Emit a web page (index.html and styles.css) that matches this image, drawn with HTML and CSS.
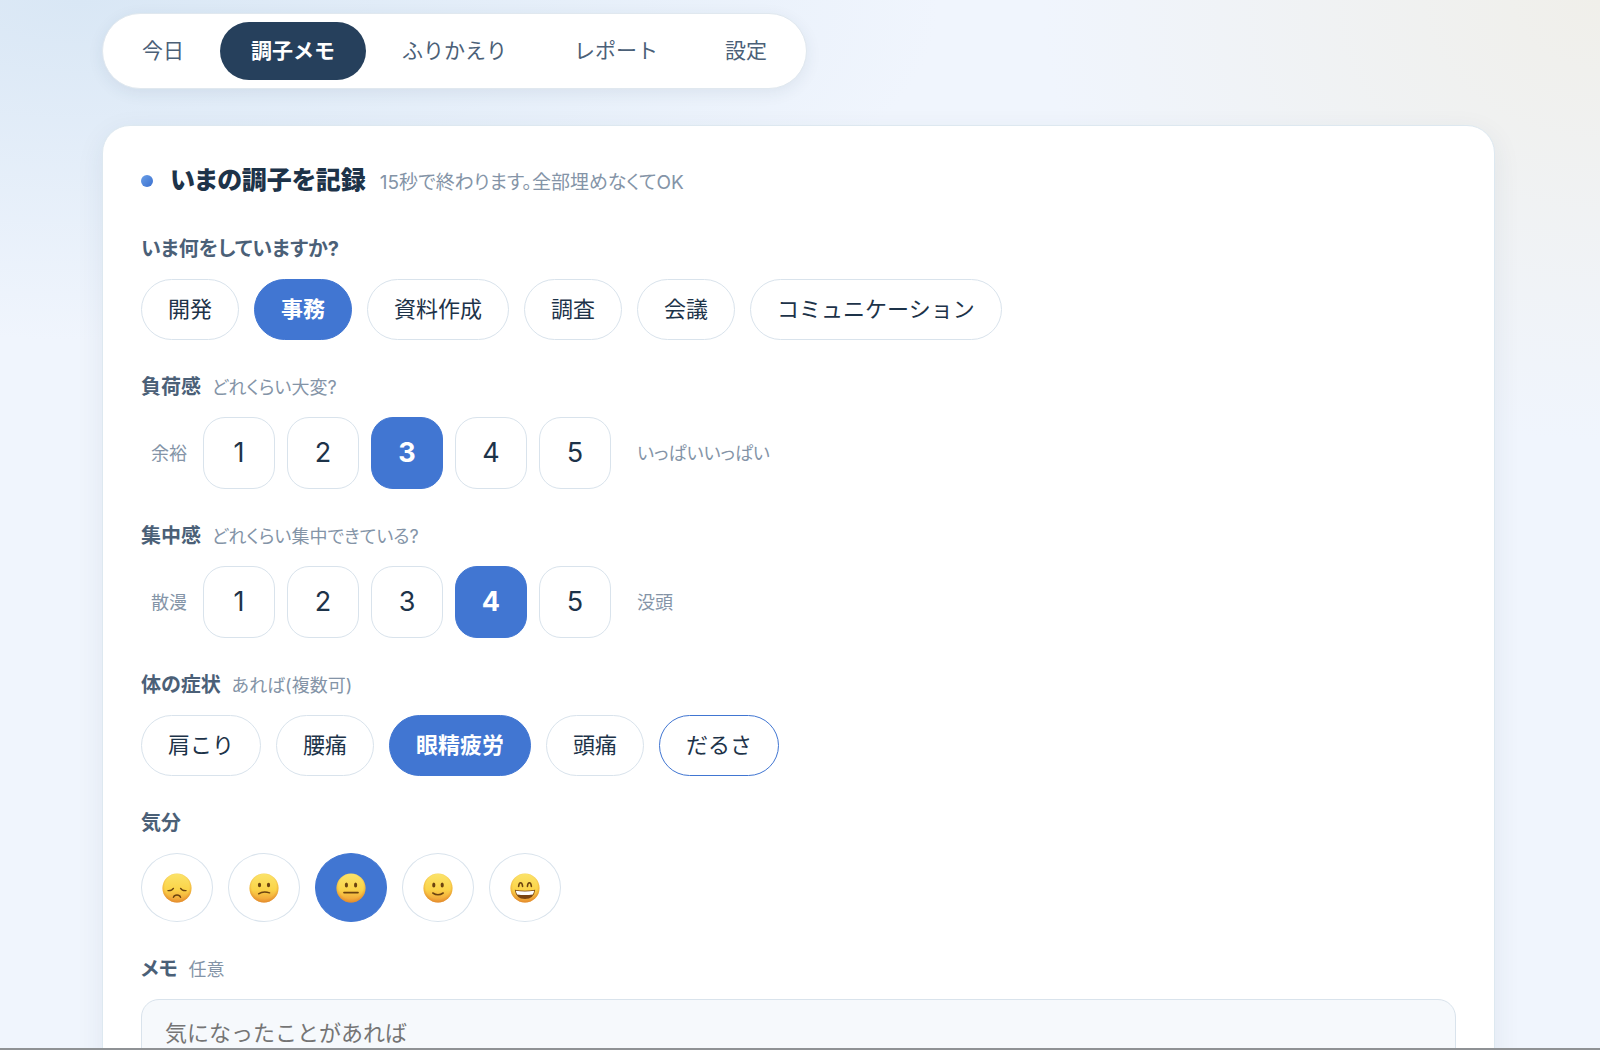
FILE: index.html
```
<!DOCTYPE html>
<html lang="ja">
<head>
  <meta charset="UTF-8">
  <meta name="viewport" content="width=device-width, initial-scale=1.0">
  <title>調子メモ</title>
  <link rel="stylesheet" href="styles.css">
</head>
<body>
  <!-- shared colours for the mood faces -->
  <svg class="defs" width="0" height="0" aria-hidden="true">
    <defs>
      <linearGradient id="face" x1="0" y1="0" x2="0" y2="1">
        <stop offset="0" stop-color="#fbe36a"/>
        <stop offset="0.55" stop-color="#fbd449"/>
        <stop offset="1" stop-color="#ee9a35"/>
      </linearGradient>
      <radialGradient id="edge" cx="0.5" cy="0.45" r="0.56">
        <stop offset="0.75" stop-color="#e8912c" stop-opacity="0"/>
        <stop offset="1" stop-color="#dc8428" stop-opacity="0.75"/>
      </radialGradient>
    </defs>
  </svg>

  <div class="page">
    <nav class="tabs">
      <button class="tab">今日</button>
      <button class="tab active" aria-current="page">調子メモ</button>
      <button class="tab">ふりかえり</button>
      <button class="tab">レポート</button>
      <button class="tab">設定</button>
    </nav>

    <main class="card">
      <header class="card-header">
        <span class="dot"></span>
        <div class="card-title">
          <h1>いまの調子を記録</h1>
          <span class="card-note">15秒で終わります。全部埋めなくてOK</span>
        </div>
      </header>

      <section class="field">
        <h2>いま何をしていますか?</h2>
        <div class="chips">
          <button class="chip">開発</button>
          <button class="chip selected" aria-pressed="true">事務</button>
          <button class="chip">資料作成</button>
          <button class="chip">調査</button>
          <button class="chip">会議</button>
          <button class="chip">コミュニケーション</button>
        </div>
      </section>

      <section class="field">
        <h2>負荷感 <span class="hint">どれくらい大変?</span></h2>
        <div class="scale">
          <span class="low">余裕</span>
          <button class="step">1</button>
          <button class="step">2</button>
          <button class="step selected" aria-pressed="true">3</button>
          <button class="step">4</button>
          <button class="step">5</button>
          <span class="high">いっぱいいっぱい</span>
        </div>
      </section>

      <section class="field">
        <h2>集中感 <span class="hint">どれくらい集中できている?</span></h2>
        <div class="scale">
          <span class="low">散漫</span>
          <button class="step">1</button>
          <button class="step">2</button>
          <button class="step">3</button>
          <button class="step selected" aria-pressed="true">4</button>
          <button class="step">5</button>
          <span class="high">没頭</span>
        </div>
      </section>

      <section class="field">
        <h2>体の症状 <span class="hint">あれば(複数可)</span></h2>
        <div class="chips">
          <button class="chip">肩こり</button>
          <button class="chip">腰痛</button>
          <button class="chip selected" aria-pressed="true">眼精疲労</button>
          <button class="chip">頭痛</button>
          <button class="chip focus">だるさ</button>
        </div>
      </section>

      <section class="field">
        <h2>気分</h2>
        <div class="chips">
          <button class="mood" aria-label="とても悪い">
            <svg viewBox="0 0 30 30">
              <circle cx="15" cy="15" r="14.5" fill="url(#face)"/>
              <circle cx="15" cy="15" r="14.5" fill="url(#edge)"/>
              <g fill="none" stroke="#6b4310" stroke-width="1.4" stroke-linecap="round">
                <path d="M6 17.6Q10 17.8 11.4 15.4"/>
                <path d="M24 17.6Q20 17.8 18.6 15.4"/>
                <path d="M11.4 24.4Q12.2 22 15 22Q17.8 22 18.6 24.4"/>
              </g>
            </svg>
          </button>
          <button class="mood" aria-label="悪い">
            <svg viewBox="0 0 30 30">
              <circle cx="15" cy="15" r="14.5" fill="url(#face)"/>
              <circle cx="15" cy="15" r="14.5" fill="url(#edge)"/>
              <ellipse cx="10.5" cy="12" rx="1.6" ry="2.2" fill="#6b4310"/>
              <ellipse cx="19.5" cy="12" rx="1.6" ry="2.2" fill="#6b4310"/>
              <path d="M9.6 20.8Q14 17.8 20.6 19.8" fill="none" stroke="#6b4310" stroke-width="1.4" stroke-linecap="round"/>
            </svg>
          </button>
          <button class="mood selected" aria-label="ふつう" aria-pressed="true">
            <svg viewBox="0 0 30 30">
              <circle cx="15" cy="15" r="14.5" fill="url(#face)"/>
              <circle cx="15" cy="15" r="14.5" fill="url(#edge)"/>
              <ellipse cx="10.4" cy="12" rx="1.6" ry="2.5" fill="#6b4310"/>
              <ellipse cx="19.6" cy="12" rx="1.6" ry="2.5" fill="#6b4310"/>
              <path d="M8 19.6H22" fill="none" stroke="#6b4310" stroke-width="1.7" stroke-linecap="round"/>
            </svg>
          </button>
          <button class="mood" aria-label="良い">
            <svg viewBox="0 0 30 30">
              <circle cx="15" cy="15" r="14.5" fill="url(#face)"/>
              <circle cx="15" cy="15" r="14.5" fill="url(#edge)"/>
              <ellipse cx="10.8" cy="12" rx="1.6" ry="2.5" fill="#6b4310"/>
              <ellipse cx="19.2" cy="12" rx="1.6" ry="2.5" fill="#6b4310"/>
              <path d="M9.8 20Q15 23.4 20.2 20" fill="none" stroke="#6b4310" stroke-width="1.5" stroke-linecap="round"/>
            </svg>
          </button>
          <button class="mood" aria-label="とても良い">
            <svg viewBox="0 0 30 30">
              <circle cx="15" cy="15" r="14.5" fill="url(#face)"/>
              <circle cx="15" cy="15" r="14.5" fill="url(#edge)"/>
              <g fill="none" stroke="#6b4310" stroke-width="1.6" stroke-linecap="round">
                <path d="M8.6 13.4Q9 9.8 10.6 9.8Q12.2 9.8 12.6 13.4"/>
                <path d="M17.4 13.4Q17.8 9.8 19.4 9.8Q21 9.8 21.4 13.4"/>
              </g>
              <path d="M4.8 16.8Q15 18.6 25.2 16.8Q24 26 15 26Q6 26 4.8 16.8Z" fill="#7a4412"/>
              <path d="M5.8 17.8Q15 19.4 24.2 17.8Q23.8 19.8 22.8 21.4Q15 22.8 7.2 21.4Q6.2 19.8 5.8 17.8Z" fill="#fff"/>
            </svg>
          </button>
        </div>
      </section>

      <section class="field">
        <h2><label for="memo">メモ</label> <span class="hint">任意</span></h2>
        <textarea id="memo" rows="3" placeholder="気になったことがあれば"></textarea>
      </section>
    </main>
  </div>
  <div class="bottom-line"></div>
</body>
</html>
```
FILE: styles.css
```
* {
  box-sizing: border-box;
}
body {
  margin: 0;
  min-height: 100vh;
  font-family: "Inter", "Noto Sans CJK JP", sans-serif;
  font-feature-settings: "palt";
  line-height: 1.5;
  color: #1d3349;
  background:
    radial-gradient(ellipse 860px 340px at 5% 0, #d9e7f5 0, rgba(217, 231, 245, 0) 100%),
    radial-gradient(ellipse 560px 440px at 100% 0, #f0efea 0, rgba(240, 239, 234, 0) 100%),
    #f0f5fd;
}
button, textarea {
  font-family: inherit;
  font-feature-settings: normal;
}
button {
  line-height: 1.5;
  cursor: pointer;
}
.defs {
  display: block;
}
.page {
  padding: 13px 105px 40px 102px;
}

/* Tabs */
.tabs {
  display: flex;
  width: fit-content;
  gap: 5px;
  padding: 8px;
  border: 1px solid #e0e8ef;
  border-radius: 40px;
  background-color: #fff;
  box-shadow: 0 4px 16px rgba(40, 65, 95, 0.08);
}
.tab {
  height: 58px;
  padding: 0 31px;
  border: none;
  border-radius: 29px;
  background: none;
  color: #4b6077;
  font-size: 21px;
}
.tab.active {
  background-color: #26405c;
  color: #fff;
  font-weight: 700;
}

/* Card */
.card {
  margin-top: 36px;
  padding: 37px 38px;
  border: 1px solid #dde8f0;
  border-radius: 28px;
  background-color: #fff;
  box-shadow: 0 8px 28px rgba(40, 65, 95, 0.08);
}
.card-header {
  display: flex;
  align-items: center;
  height: 36px;
  margin-bottom: 35px;
}
.dot {
  width: 12px;
  height: 12px;
  margin-right: 17px;
  border-radius: 50%;
  background: linear-gradient(135deg, #6a9fe8, #3a6fce);
}
.card-title {
  display: flex;
  align-items: baseline;
  gap: 14px;
}
h1 {
  margin: 0;
  font-size: 25px;
  font-weight: 800;
}
.card-note {
  color: #8494a7;
  font-size: 19px;
}

/* Fields */
.field {
  margin-bottom: 32px;
}
h2 {
  margin: 0 0 15px;
  color: #4b6077;
  font-size: 20px;
  font-weight: 700;
  line-height: 30px;
}
.hint {
  margin-left: 6px;
  color: #8494a7;
  font-size: 18px;
  font-weight: 400;
  line-height: 1;
}
.chips {
  display: flex;
  flex-wrap: wrap;
  gap: 15px;
}
.chip, .step, .mood {
  border: 1px solid #d9e3ec;
  background-color: #fff;
  color: #1d3349;
}
.chip {
  height: 61px;
  padding: 0 26px;
  border-radius: 31px;
  font-size: 22px;
}
.chip.focus {
  border-color: #4176d2;
}
.scale {
  display: flex;
  align-items: center;
  gap: 12px;
  color: #8494a7;
  font-size: 18px;
}
.low {
  width: 46px;
  margin-right: 4px;
  text-align: right;
}
.high {
  margin-left: 14px;
}
.step {
  width: 72px;
  height: 72px;
  padding: 0;
  border-radius: 22px;
  font-size: 27px;
}
.mood {
  display: flex;
  align-items: center;
  justify-content: center;
  width: 72px;
  height: 69px;
  padding: 0;
  border-radius: 50%;
}
.mood svg {
  width: 30px;
  height: 30px;
}
.chip.selected, .step.selected, .mood.selected {
  border-color: #4176d2;
  background-color: #4176d2;
  color: #fff;
  font-weight: 700;
}
textarea {
  display: block;
  width: 100%;
  padding: 17px 23px;
  border: 1px solid #d9e3ec;
  border-radius: 18px;
  background-color: #f6f9fc;
  color: #1d3349;
  font-size: 22px;
  line-height: 33px;
  resize: vertical;
}
textarea::placeholder {
  color: #757575;
}

/* Line along the bottom of the window */
.bottom-line {
  position: fixed;
  left: 0;
  right: 0;
  bottom: 0;
  height: 2px;
  background-color: #8f9295;
}
```
